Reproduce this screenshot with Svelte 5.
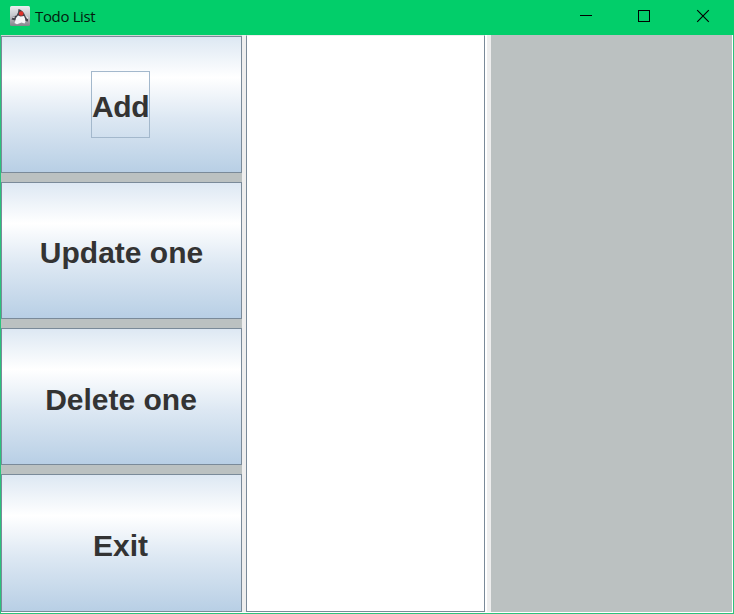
<script>
  const actions = ['Add', 'Update one', 'Delete one', 'Exit'];
  let focused = $state(0);
</script>

<div class="window">
  <header>
    <svg class="logo" width="20" height="20" viewBox="0 0 20 20">
      <defs>
        <linearGradient id="tile" x1="0" y1="0" x2="0" y2="1">
          <stop offset="0" stop-color="#eceef0" />
          <stop offset="0.5" stop-color="#c3c5ca" />
          <stop offset="1" stop-color="#85838a" />
        </linearGradient>
      </defs>
      <rect width="20" height="20" rx="1.5" fill="url(#tile)" />
      <path d="M8.5 3L8 6.5L6.5 9.5L3 10.5L1.5 13.5L5 14.5L7 12.5L14 12L15 15L18 15.5L18 13L15.5 10.5C14.5 7 12 4 8.5 3Z" fill="#44444c" />
      <path d="M6 12L8 9.5L10.5 10.5L14 10L15 12.5L15.5 15.5L14.5 17.5L11.5 16.5L7 18.2L4.5 17L5.5 14.5Z" fill="#f5f5f7" />
      <path d="M2 11.5L4.5 10L4.5 12Z M16 10L18.5 12L17 13Z" fill="#f2f2f4" />
      <circle cx="11.2" cy="7.5" r="2.3" fill="#e0302a" />
    </svg>
    <span class="title">Todo List</span>
    <div class="controls">
      <svg width="58" height="35" shape-rendering="crispEdges"><rect x="23" y="15" width="12" height="1" /></svg>
      <svg width="58" height="35" shape-rendering="crispEdges"><rect x="23.5" y="10.5" width="11" height="11" fill="none" stroke="#000" /></svg>
      <svg width="58" height="35"><path d="M24.2 10.2L35.8 21.8M35.8 10.2L24.2 21.8" stroke="#000" stroke-width="1.1" /></svg>
    </div>
  </header>
  <main>
    <nav>
      {#each actions as label, i}
        <button onclick={() => (focused = i)}>
          <span class:focused={focused === i}>{label}</span>
        </button>
      {/each}
    </nav>
    <section class="list"></section>
    <section class="detail"></section>
  </main>
</div>

<style>
  .window {
    box-sizing: border-box;
    width: 734px;
    height: 614px;
    display: flex;
    flex-direction: column;
    background: #02ce6a;
    overflow: hidden;
  }
  header {
    height: 35px;
    flex: none;
    display: flex;
    align-items: flex-start;
  }
  .logo {
    margin: 6px 5px 0 10px;
  }
  .title {
    font: 15px/33px "Open Sans", "Noto Sans", sans-serif;
    letter-spacing: -0.35px;
    color: #041a0d;
    white-space: nowrap;
  }
  .controls {
    display: flex;
    margin-left: auto;
    margin-right: 3px;
  }
  .controls svg {
    display: block;
  }
  main {
    box-sizing: border-box;
    flex: 1;
    display: flex;
    gap: 4px;
    margin: 0 1px 1px;
    border-right: 1px solid #fff;
    border-bottom: 1px solid #fff;
    background: #eee;
    box-shadow: 0 0 0 1px #2ac27c;
    clip-path: inset(0 -1px -1px -1px);
  }
  nav {
    box-sizing: border-box;
    width: 241px;
    flex: none;
    display: flex;
    flex-direction: column;
    gap: 9px;
    background: #bbc1c1;
    border-top: 1px solid #d0d5d5;
  }
  button {
    box-sizing: border-box;
    height: 137px;
    flex: none;
    display: flex;
    align-items: center;
    justify-content: center;
    margin: 0;
    padding: 0;
    border: 1px solid #7a8a99;
    border-radius: 0;
    background: linear-gradient(#dde8f3 0%, #fff 30%, #dde8f3 60%, #b8cfe5 100%);
    font: bold 30px/35px "Liberation Sans", Arial, sans-serif;
    color: #333;
  }
  button:last-child {
    height: 138px;
    padding: 0 2px 0 0;
  }
  button span {
    box-sizing: border-box;
    height: 67px;
    border: 1px solid transparent;
    padding-top: 17px;
    white-space: nowrap;
  }
  button:first-child {
    padding-right: 2px;
  }
  button:first-child span {
    width: 59px;
    letter-spacing: -0.4px;
  }
  button:nth-child(3) {
    padding-right: 1px;
  }
  button:nth-child(3) span {
    padding-top: 18px;
  }
  button span.focused {
    border-color: #a3b8cc;
  }
  .list {
    box-sizing: border-box;
    width: 239px;
    flex: none;
    background: #fff;
    border: solid #7a8a99;
    border-width: 0 1px 1px;
    border-top: 1px solid #eee;
    box-shadow: 2px 0 #fff;
    margin-right: 2px;
  }
  .detail {
    flex: 1;
    background: #bbc1c1;
  }
</style>
